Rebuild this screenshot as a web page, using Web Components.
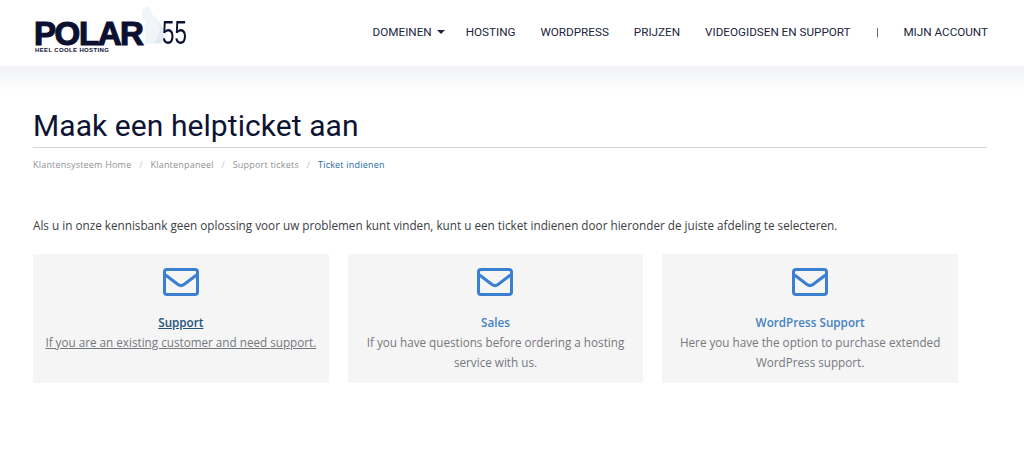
<!DOCTYPE html>
<html lang="nl">
<head>
<meta charset="utf-8">
<title>Maak een helpticket aan</title>
<style>
  body { margin: 0; background: #fff; font-family: "Open Sans", sans-serif; }
</style>
</head>
<body>
<site-header></site-header>
<page-title heading="Maak een helpticket aan">
  <a>Klantensysteem Home</a>
  <a>Klantenpaneel</a>
  <a>Support tickets</a>
  <a>Ticket indienen</a>
</page-title>
<ticket-page>
  Als u in onze kennisbank geen oplossing voor uw problemen kunt vinden, kunt u een ticket indienen door hieronder de juiste afdeling te selecteren.
  <ticket-card slot="cards" title="Support" hover>If you are an existing customer and need support.</ticket-card>
  <ticket-card slot="cards" title="Sales">If you have questions before ordering a hosting service with us.</ticket-card>
  <ticket-card slot="cards" title="WordPress Support">Here you have the option to purchase extended WordPress support.</ticket-card>
</ticket-page>

<script>
class SiteLogo extends HTMLElement {
  constructor() {
    super();
    this.attachShadow({ mode: "open" });
    this.shadowRoot.innerHTML = `
      <style>
        :host { display: block; width: 156px; height: 50px; position: relative; color: #0b1030; }
        .polar {
          position: absolute; left: 1px; top: 15px;
          font: 700 33px/26px "Liberation Sans", sans-serif;
          letter-spacing: -1.4px;
          -webkit-text-stroke: 1.2px #0b1030;
        }
        .nums {
          position: absolute; left: 129px; top: 10px;
          font: 400 33px/33px "Liberation Sans", sans-serif;
          transform: scaleX(.68); transform-origin: left top;
        }
        .tag {
          position: absolute; left: 2px; top: 41px;
          font: 700 6px/6px "Liberation Sans", sans-serif;
          letter-spacing: .35px;
        }
        svg { position: absolute; left: 107px; top: -1px; filter: blur(.5px); }
      </style>
      <span class="polar">POLAR</span>
      <svg width="28" height="40" viewBox="0 0 28 40">
        <path d="M5 2c3-1 5 0 6 2 1 3 0 4 2 6 4 3 7 7 8 11 3 2 6 5 6 9 0 5-3 9-7 9H4c2-3 2-6 1-10-1-5-1-9 1-12C4 14 1 11 2 8c0-3 1-5 3-6z" fill="#f2f5f8"/>
        <path d="M15 14c3 3 5 7 5 11-1 5-3 9-6 13 5 1 9-1 10-5 2-6-2-14-9-19z" fill="#e3eaf3"/>
      </svg>
      <span class="nums">55</span>
      <span class="tag">HEEL COOLE HOSTING</span>
    `;
  }
}
customElements.define("site-logo", SiteLogo);

class NavLink extends HTMLElement {
  constructor() {
    super();
    this.attachShadow({ mode: "open" });
    this.shadowRoot.innerHTML = `
      <style>
        :host { display: inline-flex; align-items: center; gap: 5px; white-space: nowrap; }
        .caret { display: none; width: 0; height: 0; border: 4px solid transparent; border-top-color: #20243d; border-bottom: 0; }
        :host([caret]) .caret { display: block; }
      </style>
      <slot></slot><span class="caret"></span>
    `;
  }
}
customElements.define("nav-link", NavLink);

class SiteHeader extends HTMLElement {
  constructor() {
    super();
    this.attachShadow({ mode: "open" });
    this.shadowRoot.innerHTML = `
      <style>
        :host { display: block; }
        header {
          height: 66px; box-sizing: border-box; padding: 6px 36px 0 33px;
          display: flex; justify-content: space-between; align-items: flex-start;
          background: #fff;
        }
        nav {
          display: flex; align-items: center; gap: 25px; height: 52px;
          font: 400 11.7px/16px Roboto, sans-serif; color: #20243d;
        }
        .fade { height: 26px; background: linear-gradient(#f1f2f6, #fff); }
      </style>
      <header>
        <site-logo></site-logo>
        <nav>
          <nav-link caret style="margin-right:-4px">DOMEINEN</nav-link>
          <nav-link>HOSTING</nav-link>
          <nav-link>WORDPRESS</nav-link>
          <nav-link>PRIJZEN</nav-link>
          <nav-link>VIDEOGIDSEN EN SUPPORT</nav-link>
          <nav-link style="will-change:transform;color:#555">|</nav-link>
          <nav-link>MIJN ACCOUNT</nav-link>
        </nav>
      </header>
      <div class="fade"></div>
    `;
  }
}
customElements.define("site-header", SiteHeader);

class PageTitle extends HTMLElement {
  constructor() {
    super();
    this.attachShadow({ mode: "open" });
    this.shadowRoot.innerHTML = `
      <style>
        :host { display: block; margin: 0 37px 0 33px; }
        h1 {
          margin: 0; padding: 16px 0 3px; border-bottom: 1px solid #d4d6da;
          font: 400 30px/36px Roboto, sans-serif; letter-spacing: .07px; color: #0d1433;
        }
        .crumbs {
          display: flex; gap: 0; padding-top: 10px;
          font: 400 9px/13px "Open Sans", sans-serif; letter-spacing: .2px; color: #8f9296;
        }
        ::slotted(a) { display: inline-block; }
        ::slotted(a:not(:last-child))::after { content: "/"; color: #c4c6c9; padding: 0 7.8px; }
        ::slotted(a:last-child) { color: #1f6c9e; }
      </style>
      <h1></h1>
      <div class="crumbs"><slot></slot></div>
    `;
  }

  connectedCallback() {
    this.shadowRoot.querySelector("h1").textContent = this.getAttribute("heading") || "";
  }
}
customElements.define("page-title", PageTitle);

class TicketPage extends HTMLElement {
  constructor() {
    super();
    this.attachShadow({ mode: "open" });
    this.shadowRoot.innerHTML = `
      <style>
        :host { display: block; padding: 45px 66px 0 33px; }
        p { margin: 0 0 20px; font: 400 11.73px/18px "Open Sans", sans-serif; color: #3b3e42; }
        .cards { display: grid; grid-template-columns: repeat(3, 295.67px); gap: 19px; }
      </style>
      <p><slot></slot></p>
      <div class="cards"><slot name="cards"></slot></div>
    `;
  }
}
customElements.define("ticket-page", TicketPage);

class TicketCard extends HTMLElement {
  constructor() {
    super();
    this.attachShadow({ mode: "open" });
    this.shadowRoot.innerHTML = `
      <style>
        :host { display: block; height: 129px; box-sizing: border-box; padding: 14px 8px 0; background: #f5f5f6; text-align: center; }
        svg { display: block; margin: 0 auto 16px; }
        strong { display: block; font: 600 11.7px/21px "Open Sans", sans-serif; color: #4482c2; }
        div { font: 400 11.7px/19.5px "Open Sans", sans-serif; color: #75787c; }
        :host([hover]) strong { color: #23527c; text-decoration: underline; }
        :host([hover]) div { text-decoration: underline; }
      </style>
      <svg width="36" height="28" viewBox="0 0 36 28" fill="none" stroke="#3b80d0" stroke-width="3" stroke-linejoin="round">
        <rect x="1.5" y="1.5" width="33" height="25" rx="2.5"/>
        <path d="M2.5 7 15 16.5c2 1.5 4 1.5 6 0L33.5 7"/>
      </svg>
      <strong></strong>
      <div><slot></slot></div>
    `;
  }

  connectedCallback() {
    this.shadowRoot.querySelector("strong").textContent = this.getAttribute("title") || "";
  }
}
customElements.define("ticket-card", TicketCard);
</script>
</body>
</html>
